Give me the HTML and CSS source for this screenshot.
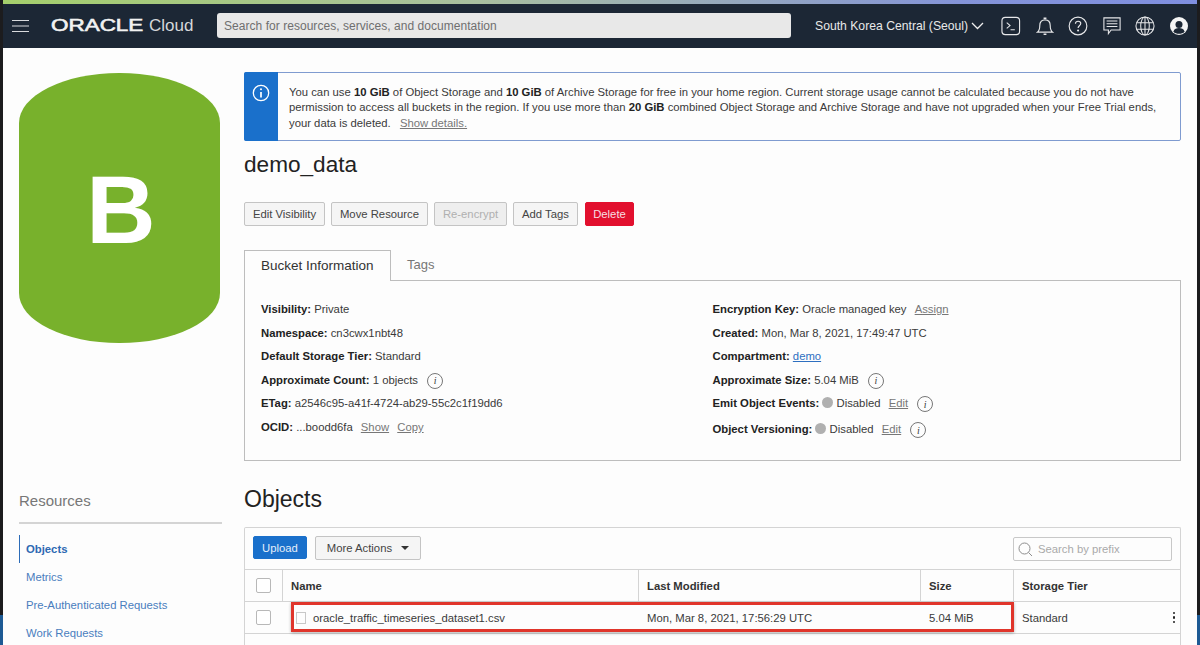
FILE: index.html
```html
<!DOCTYPE html>
<html>
<head>
  <title>demo_data - Oracle Cloud</title>
  <link rel="stylesheet" href="styles.css">
</head>
<body>
  <div class="edge edge-left"></div>
  <div class="edge edge-right"></div>
  <div class="top-strip"></div>
  <header class="topbar">
    <svg class="burger" width="17" height="14" viewBox="0 0 17 14"><path d="M0 1.5h17M0 7h17M0 12.5h17" stroke="#d8dadd" stroke-width="1.2"/></svg>
    <div class="brand"><span class="brand-oracle">ORACLE</span><span class="brand-cloud">Cloud</span></div>
    <div class="global-search">Search for resources, services, and documentation</div>
    <div class="region">South Korea Central (Seoul)
      <svg width="13" height="8" viewBox="0 0 13 8"><path d="M1 1l5.5 5.5L12 1" fill="none" stroke="#eee" stroke-width="1.3"/></svg>
    </div>
    <div class="top-icons">
      <svg width="20" height="20" viewBox="0 0 21 21" fill="none" stroke="#e6e7e9"><rect x="1" y="1.5" width="18.5" height="18" rx="3.5" stroke-width="1.2"/><path d="M6 7l3.5 3L6 13M10 14.5h4.5" stroke-width="1.1"/></svg>
      <svg width="18" height="20" viewBox="0 0 19 21" fill="none" stroke="#e6e7e9" stroke-width="1.2"><path d="M1.5 17c2-1.5 2.5-3 2.5-7 0-4 2.3-6 5.5-6s5.5 2 5.5 6c0 4 .5 5.5 2.5 7z"/><path d="M8 2.2h3M8 19.3h3" stroke-width="1.6"/></svg>
      <svg width="20" height="20" viewBox="0 0 21 21" fill="none" stroke="#e6e7e9" stroke-width="1.2"><circle cx="10.5" cy="10.5" r="9.3"/><path d="M7.8 8.2c0-1.7 1.2-2.7 2.8-2.7s2.8 1 2.8 2.4c0 2.3-2.8 2.3-2.8 4.6"/><circle cx="10.6" cy="15.3" r=".5" fill="#e6e7e9"/></svg>
      <svg width="18" height="20" viewBox="0 0 20 21" fill="none" stroke="#e6e7e9" stroke-width="1.2"><path d="M1 1.5h18v13.5H9l-3 4v-4H1z"/><path d="M4 5h12M4 8h12M4 11h12"/></svg>
      <svg width="20" height="20" viewBox="0 0 21 21" fill="none" stroke="#e6e7e9" stroke-width="1.1"><circle cx="10.5" cy="10.5" r="9.5"/><ellipse cx="10.5" cy="10.5" rx="4.5" ry="9.5"/><path d="M10.5 1v19M1.8 7h17.4M1.8 14h17.4"/></svg>
      <svg width="18" height="18" viewBox="0 0 19 19"><circle cx="9.5" cy="9.5" r="9.5" fill="#f5f5f5"/><circle cx="9.5" cy="7.8" r="3.7" fill="#1c2735"/><path d="M3.5 15.5c1-3 3.5-3.8 6-3.8s5 .8 6 3.800c-1.500 1.500-3.700 2.300-6 2.300s-4.500-.8-6-2.300z" fill="#1c2735"/></svg>
    </div>
  </header>

  <div class="page">
    <aside class="side">
      <div class="bucket-icon">B</div>
      <h3 class="res-title">Resources</h3>
      <ul class="res-list">
        <li class="active">Objects</li>
        <li>Metrics</li>
        <li>Pre-Authenticated Requests</li>
        <li>Work Requests</li>
      </ul>
    </aside>

    <main class="content">
      <div class="banner">
        <div class="banner-flag">
          <svg width="18" height="18" viewBox="0 0 18 18" fill="none" stroke="#fff"><circle cx="9" cy="9" r="7.7" stroke-width="1.3"/><path d="M9 8v5.5" stroke-width="1.7"/><circle cx="9" cy="5.2" r="1" fill="#fff" stroke="none"/></svg>
        </div>
        <p class="banner-text">You can use <b>10 GiB</b> of Object Storage and <b>10 GiB</b> of Archive Storage for free in your home region. Current storage usage cannot be calculated because you do not have permission to access all buckets in the region. If you use more than <b>20 GiB</b> combined Object Storage and Archive Storage and have not upgraded when your Free Trial ends, your data is deleted. <a class="quiet show-details">Show details.</a></p>
      </div>

      <h1 class="title">demo_data</h1>

      <div class="actions">
        <button class="btn w-visibility">Edit Visibility</button>
        <button class="btn w-move">Move Resource</button>
        <button class="btn disabled w-encrypt">Re-encrypt</button>
        <button class="btn w-tags">Add Tags</button>
        <button class="btn danger">Delete</button>
      </div>

      <div class="tabs">
        <div class="tab active">Bucket Information</div>
        <div class="tab">Tags</div>
      </div>
      <div class="info">
        <div class="info-col">
          <div class="row"><b>Visibility:</b> Private</div>
          <div class="row"><b>Namespace:</b> cn3cwx1nbt48</div>
          <div class="row"><b>Default Storage Tier:</b> Standard</div>
          <div class="row"><b>Approximate Count:</b> 1 objects <span class="tip">i</span></div>
          <div class="row"><b>ETag:</b> a2546c95-a41f-4724-ab29-55c2c1f19dd6</div>
          <div class="row"><b>OCID:</b> ...boodd6fa <a class="quiet">Show</a> <a class="quiet">Copy</a></div>
        </div>
        <div class="info-col">
          <div class="row"><b>Encryption Key:</b> Oracle managed key <a class="quiet">Assign</a></div>
          <div class="row"><b>Created:</b> Mon, Mar 8, 2021, 17:49:47 UTC</div>
          <div class="row"><b>Compartment:</b> <a class="link">demo</a></div>
          <div class="row"><b>Approximate Size:</b> 5.04 MiB <span class="tip">i</span></div>
          <div class="row"><b>Emit Object Events:</b> <span class="dot"></span> Disabled <a class="quiet">Edit</a> <span class="tip">i</span></div>
          <div class="row row-low"><b>Object Versioning:</b> <span class="dot"></span> Disabled <a class="quiet">Edit</a> <span class="tip">i</span></div>
        </div>
      </div>

      <h2 class="objects-title">Objects</h2>

      <div class="panel">
        <div class="toolbar">
          <button class="btn primary">Upload</button>
          <button class="btn more">More Actions <span class="caret"></span></button>
          <div class="prefix">
            <svg width="15" height="15" viewBox="0 0 15 15" fill="none" stroke="#8d8d8d"><circle cx="6.5" cy="6.5" r="5.5"/><path d="M10.5 10.5l3.5 3.5"/></svg>
            Search by prefix
          </div>
        </div>
        <div class="grid head">
          <div class="cell"><span class="check"></span></div>
          <div class="cell">Name</div>
          <div class="cell">Last Modified</div>
          <div class="cell">Size</div>
          <div class="cell">Storage Tier</div>
        </div>
        <div class="grid body-row">
          <div class="cell"><span class="check"></span></div>
          <div class="cell name-cell"><span class="file-icon"></span>oracle_traffic_timeseries_dataset1.csv</div>
          <div class="cell">Mon, Mar 8, 2021, 17:56:29 UTC</div>
          <div class="cell">5.04 MiB</div>
          <div class="cell tier-cell">Standard <span class="kebab"><i></i><i></i><i></i></span></div>
          <div class="highlight"></div>
        </div>
      </div>
    </main>
  </div>
</body>
</html>
```

FILE: styles.css
```css
html, body {
  height: 645px;
  overflow: hidden;
}
body {
  margin: 0;
  background-color: #fdfdfd;
  font-family: "Liberation Sans", Arial, sans-serif;
  font-size: 11.3px;
  color: #3a3a3a;
  border-left: 3px solid #1c1c1e;
  border-right: 3px solid #1c1c1e;
}
/* desktop showing at the bottom corners of the window */
.edge {
  position: absolute;
  bottom: 0;
  width: 3px;
  height: 30px;
  background-color: #1d5a94;
}
.edge-left {
  left: 0;
}
.edge-right {
  right: 0;
}
.top-strip {
  height: 4px;
  background: linear-gradient(to right, #a5cf6c, #a9bfa0 40%, #8494d8 80%, #7f8fe0);
}
.topbar {
  height: 44px;
  background-color: #1c2735;
  display: flex;
  align-items: center;
  padding-left: 9px;
  color: #eee;
}
.burger {
  margin-right: 22px;
}
.brand {
  width: 166px;
  display: flex;
  align-items: baseline;
  color: #f2f2f2;
}
.brand-oracle {
  font-size: 17px;
  -webkit-text-stroke: .6px #f2f2f2;
  transform: scale(1.32, 1);
  transform-origin: left center;
  width: 98px;
}
.brand-cloud {
  font-size: 17px;
  color: #d5d7da;
}
.global-search {
  width: 567px;
  height: 25px;
  margin-top: -1px;
  padding-left: 7px;
  line-height: 27px;
  background-color: #e8e8e8;
  border-radius: 3px;
  color: #6f6f6f;
  font-size: 12px;
  letter-spacing: .04px;
}
.region {
  margin-left: 24px;
  font-size: 12.2px;
  color: #e9e9e9;
  display: flex;
  align-items: center;
  gap: 3px;
  white-space: nowrap;
}
.top-icons {
  margin-left: 17px;
  display: flex;
  align-items: center;
  gap: 14.5px;
}

.page {
  display: flex;
  padding: 24px 0 0 16px;
}
.side {
  width: 203px;
  margin-right: 22px;
  flex-shrink: 0;
}
.bucket-icon {
  width: 201px;
  height: 270px;
  margin-top: 1px;
  padding: 4px 0 0 3px;
  box-sizing: border-box;
  background-color: #78b12c;
  border-radius: 100px / 50px;
  color: #fff;
  font-size: 96px;
  font-weight: bold;
  display: flex;
  align-items: center;
  justify-content: center;
}
.res-title {
  margin: 148px 0 0;
  height: 31px;
  border-bottom: 2px solid #d4d4d4;
  font-size: 15px;
  font-weight: normal;
  color: #777;
  line-height: 20px;
}
.res-list {
  list-style: none;
  margin: 11px 0 0;
  padding: 0;
  color: #4a7dbd;
}
.res-list li {
  height: 28px;
  line-height: 28px;
  padding-left: 7px;
}
.res-list li.active {
  border-left: 1.5px solid #2c6cb8;
  padding-left: 6px;
  font-weight: bold;
  color: #2d69b3;
}

.content {
  width: 937px;
  flex-shrink: 0;
}
.banner {
  height: 69px;
  box-sizing: border-box;
  border: 1px solid #7f9bd0;
  border-radius: 2px;
  display: flex;
}
.banner-flag {
  width: 34px;
  flex-shrink: 0;
  margin: -1px 0 -1px -1px;
  background-color: #1a70cb;
  border-radius: 2px 0 0 2px;
  display: flex;
  justify-content: center;
  padding-top: 12px;
  box-sizing: border-box;
}
.banner-text {
  margin: 0;
  padding: 12px 14px 0 11px;
  line-height: 15.3px;
}
.banner-text b {
  color: #222;
}
.quiet {
  color: #777;
  text-decoration: underline;
  margin-left: 5px;
}
.show-details {
  margin-left: 6px;
}
.link {
  color: #2d6fc0;
  text-decoration: underline;
}
.title {
  margin: 11px 0 0;
  font-size: 22.6px;
  line-height: 25px;
  font-weight: normal;
  color: #222;
}
.actions {
  margin-top: 25px;
  display: flex;
  gap: 6px;
}
.btn {
  height: 24px;
  padding: 0;
  box-sizing: border-box;
  border: 1px solid #c4c4c4;
  border-radius: 2px;
  background-color: #f5f5f5;
  color: #444;
  font-family: inherit;
  font-size: 11.3px;
}
.w-visibility {
  width: 81px;
}
.w-move {
  width: 97px;
}
.w-encrypt {
  width: 73px;
}
.w-tags {
  width: 65px;
}
.btn.disabled {
  background-color: #eee;
  color: #b0b0b0;
}
.btn.danger {
  width: 49px;
  margin-left: 1px;
  background-color: #e2102e;
  border-color: #e2102e;
  color: #f7dfe1;
}
.btn.primary {
  background-color: #1a70cb;
  border-color: #1a70cb;
  color: #e4eefa;
  width: 54px;
  height: 23px;
}
.btn.more {
  margin-left: 8px;
  width: 106px;
}
.caret {
  display: inline-block;
  margin-left: 6px;
  vertical-align: 2px;
  border-top: 4px solid #333;
  border-left: 4px solid transparent;
  border-right: 4px solid transparent;
}
.tabs {
  margin-top: 24px;
  height: 30px;
  display: flex;
}
.tab {
  padding: 7px 16px 0;
  color: #777;
  font-size: 13px;
}
.tab.active {
  width: 147px;
  box-sizing: border-box;
  height: 31px;
  font-size: 13.5px;
  color: #333;
  background-color: #fdfdfd;
  border: 1px solid #bdbdbd;
  border-bottom: none;
  position: relative;
  z-index: 1;
}
.info {
  height: 181px;
  box-sizing: border-box;
  border: 1px solid #bdbdbd;
  padding: 17px 16px 0;
  display: flex;
}
.info-col {
  width: 452px;
}
.row {
  height: 23.6px;
  line-height: 23.6px;
  white-space: nowrap;
}
.row b {
  color: #222;
}
.row-low {
  margin-top: 2.5px;
}
.tip {
  display: inline-flex;
  align-items: center;
  justify-content: center;
  width: 14px;
  height: 14px;
  margin-left: 6px;
  border: 1px solid #777;
  border-radius: 50%;
  font-family: "Liberation Serif", serif;
  font-style: italic;
  font-size: 10px;
  vertical-align: middle;
}
.dot {
  display: inline-block;
  width: 11px;
  height: 11px;
  border-radius: 50%;
  background-color: #b0b0b0;
  vertical-align: -1px;
}
.objects-title {
  margin: 25px 0 0;
  font-size: 23px;
  line-height: 26px;
  font-weight: normal;
  color: #222;
}
.panel {
  margin-top: 15px;
  border: 1px solid #d4d4d4;
  border-bottom: none;
  border-radius: 2px 2px 0 0;
  height: 130px;
}
.toolbar {
  height: 41px;
  display: flex;
  align-items: flex-start;
  padding: 8px 8px 0;
  box-sizing: border-box;
}
.prefix {
  margin-left: auto;
  margin-top: 1px;
  width: 159px;
  height: 24px;
  box-sizing: border-box;
  border: 1px solid #c8c8c8;
  border-radius: 2px;
  display: flex;
  align-items: center;
  gap: 5px;
  padding-left: 4px;
  color: #aaa;
}
.grid {
  display: grid;
  grid-template-columns: 38px 356px 282px 93px 1fr;
  position: relative;
  border-top: 1px solid #d4d4d4;
}
.head {
  height: 31px;
  font-weight: bold;
  color: #333;
}
.head .cell {
  border-right: 1px solid #d4d4d4;
}
.head .cell:last-child {
  border-right: none;
}
.body-row {
  height: 31px;
  border-bottom: 1px solid #d4d4d4;
}
.cell {
  display: flex;
  align-items: center;
  padding-left: 8px;
}
.check {
  width: 13px;
  height: 13px;
  margin-left: 3px;
  border: 1px solid #b8b8b8;
  border-radius: 2px;
  background-color: #fff;
}
.name-cell {
  padding-left: 13px;
}
.file-icon {
  width: 8px;
  height: 10px;
  margin-right: 7px;
  border: 1px solid #c8c8c8;
}
.tier-cell {
  justify-content: space-between;
}
.kebab {
  display: flex;
  flex-direction: column;
  gap: 2px;
  margin-right: 5px;
}
.kebab i {
  width: 2.5px;
  height: 2.5px;
  background-color: #222;
  border-radius: 50%;
}
.highlight {
  position: absolute;
  left: 46px;
  top: 0;
  width: 723px;
  height: 30px;
  box-sizing: border-box;
  border: 3px solid #e0352b;
  box-shadow: 0 1px 3px rgba(0, 0, 0, .3);
}
```
